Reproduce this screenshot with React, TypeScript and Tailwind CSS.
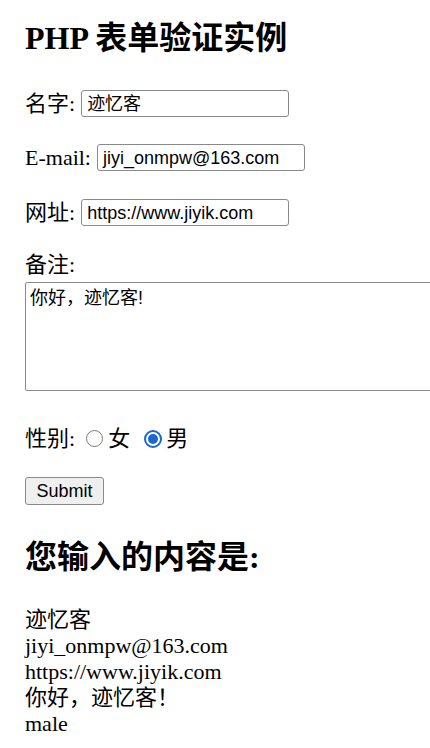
const serif = "font-['Liberation_Serif','Noto_Sans_CJK_SC',serif]";
const sans = "font-['Liberation_Sans','Noto_Sans_CJK_SC',sans-serif]";

function Field({ label, value }: { label: string; value: string }) {
  return (
    <div className="flex h-[27px] items-center gap-[6px]">
      <span>{label}</span>
      <div className={`${sans} flex h-[27px] w-[208px] items-center rounded-[3px] border border-[#8a8a8a] bg-white px-[5px] text-[18px] text-black`}>
        {value}
      </div>
    </div>
  );
}

function Radio({ checked }: { checked?: boolean }) {
  if (checked) {
    return (
      <span className="flex h-[18px] w-[18px] shrink-0 items-center justify-center rounded-full border-[2px] border-[#1b65d4] bg-white">
        <span className="block h-[10px] w-[10px] rounded-full bg-[#1b65d4]" />
      </span>
    );
  }
  return <span className="block h-[17px] w-[17px] shrink-0 rounded-full border border-[#7a7a7a] bg-white" />;
}

export default function App() {
  const output = ["迹忆客", "jiyi_onmpw@163.com", "https://www.jiyik.com", "你好，迹忆客！", "male"];

  return (
    <div className={`${serif} min-h-[748px] w-[430px] overflow-hidden bg-white px-[25px] pt-[20px] text-[22px] leading-[26px] text-black`}>
      <h2 className="text-[32px] font-bold leading-[37px]">PHP 表单验证实例</h2>

      <div className="mt-[33px]">
        <Field label="名字:" value="迹忆客" />
      </div>
      <div className="mt-[27px]">
        <Field label="E-mail:" value="jiyi_onmpw@163.com" />
      </div>
      <div className="mt-[28px]">
        <Field label="网址:" value="https://www.jiyik.com" />
      </div>

      <div className="mt-[26px]">备注:</div>
      <div className={`${sans} mt-[4px] h-[109px] w-[420px] rounded-[2px] border border-[#8a8a8a] px-[4px] pt-[4px] text-[18px] leading-[22px]`}>
        你好，迹忆客!
      </div>

      <div className="mt-[34px] flex h-[27px] items-center">
        <span>性别:</span>
        <span className="ml-[11px]"><Radio /></span>
        <span className="ml-[5px]">女</span>
        <span className="ml-[14px]"><Radio checked /></span>
        <span className="ml-[4px]">男</span>
      </div>

      <div className="mt-[25px]">
        <button className={`${sans} h-[28px] w-[79px] rounded-[3px] border border-[#8a8a8a] bg-[#efefef] text-[18px] leading-[26px] text-black`}>
          Submit
        </button>
      </div>

      <h2 className="mt-[34px] text-[32px] font-bold leading-[37px]">您输入的内容是:</h2>

      <div className="mt-[31px]">
        {output.map((line) => (
          <div key={line}>{line}</div>
        ))}
      </div>
    </div>
  );
}
